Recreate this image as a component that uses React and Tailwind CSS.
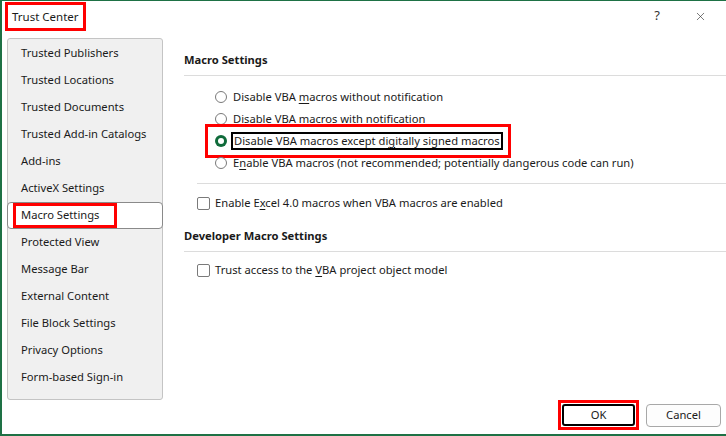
import { X } from "lucide-react";

const navItems = [
  "Trusted Publishers",
  "Trusted Locations",
  "Trusted Documents",
  "Trusted Add-in Catalogs",
  "Add-ins",
  "ActiveX Settings",
  "Macro Settings",
  "Protected View",
  "Message Bar",
  "External Content",
  "File Block Settings",
  "Privacy Options",
  "Form-based Sign-in",
];

function Radio({ checked }) {
  if (checked) {
    return (
      <span className="w-[12px] h-[12px] rounded-full bg-[#0f6b3a] flex items-center justify-center shrink-0">
        <span className="w-[6px] h-[6px] rounded-full bg-white"></span>
      </span>
    );
  }
  return <span className="w-[12px] h-[12px] rounded-full border border-[#7a7a7a] bg-white shrink-0"></span>;
}

function Checkbox() {
  return <span className="w-[13px] h-[13px] rounded-[2px] border border-[#7a7a7a] bg-white shrink-0"></span>;
}

function Ul({ children }) {
  return <u className="underline-offset-2">{children}</u>;
}

export default function App() {
  return (
    <div
      className="w-[726px] h-[436px] bg-white border-l-2 border-t border-b-2 border-[#1e7145] flex flex-col text-[11.2px] text-[#1a1a1a] overflow-hidden"
      style={{ fontFamily: '"Noto Sans", "Open Sans", sans-serif' }}
    >
      {/* title bar */}
      <div className="h-[37px] flex items-start shrink-0">
        <div className="ml-[3px] mt-[1px] h-[29px] px-[4px] border-[3px] border-[#ff0000] flex items-center">
          <span className="text-[11.5px] text-[#1a1a1a]">Trust Center</span>
        </div>
        <div className="ml-auto flex items-center h-[30px] mr-[19px] gap-[34px] text-[#333]">
          <span className="text-[13px]">?</span>
          <X className="w-[13px] h-[13px]" strokeWidth={1.2} />
        </div>
      </div>

      <div className="flex flex-1">
        {/* sidebar */}
        <div className="ml-[5px] w-[156px] h-[362px] pt-[1px] bg-[#f0f0f0] border border-[#c4c4c4] rounded-[3px] flex flex-col shrink-0">
          {navItems.map((item) =>
            item === "Macro Settings" ? (
              <div
                key={item}
                className="h-[27px] -mx-[1px] bg-white border border-[#8a8a8a] rounded-[4px] flex items-center pl-[5px]"
              >
                <div className="h-[25px] border-[3px] border-[#ff0000] flex items-center pl-[5px] pr-[15px]">
                  {item}
                </div>
              </div>
            ) : (
              <div key={item} className="h-[27px] flex items-center pl-[13px]">
                {item}
              </div>
            )
          )}
        </div>

        {/* main */}
        <div className="flex-1 pl-[21px] flex flex-col">
          <div className="mt-[12px] h-[20px] flex items-center font-bold">Macro Settings</div>
          <div className="mt-[5px] border-t border-[#dcdcdc]"></div>

          <div className="mt-[10px] pl-[31px] flex flex-col">
            <div className="h-[22px] flex items-center gap-[6px]">
              <Radio />
              <span>
                Disable VBA <Ul>m</Ul>acros without notification
              </span>
            </div>
            <div className="h-[22px] flex items-center gap-[6px]">
              <Radio />
              <span>Disable VBA macros with notification</span>
            </div>
            <div className="h-[22px] flex items-center">
              <div className="-ml-[10px] h-[34px] pl-[7px] pr-[5px] border-[3px] border-[#ff0000] flex items-center gap-[4px]">
                <Radio checked />
                <span className="border-2 border-black px-[1px] leading-[14px]">
                  Disable VBA macros except di<Ul>g</Ul>itally signed macros
                </span>
              </div>
            </div>
            <div className="h-[22px] flex items-center gap-[6px]">
              <Radio />
              <span>
                E<Ul>n</Ul>able VBA macros (not recommended; potentially dangerous code can run)
              </span>
            </div>
          </div>

          <div className="mt-[9px] ml-[13px] border-t border-[#dcdcdc]"></div>
          <div className="mt-[8px] ml-[13px] h-[22px] flex items-center gap-[5px]">
            <Checkbox />
            <span>
              Enable E<Ul>x</Ul>cel 4.0 macros when VBA macros are enabled
            </span>
          </div>

          <div className="mt-[12px] h-[20px] flex items-center font-bold">Developer Macro Settings</div>
          <div className="mt-[5px] border-t border-[#dcdcdc]"></div>
          <div className="mt-[7px] ml-[13px] h-[22px] flex items-center gap-[5px]">
            <Checkbox />
            <span>
              Trust access to the <Ul>V</Ul>BA project object model
            </span>
          </div>
        </div>
      </div>

      {/* footer */}
      <div className="h-[35px] flex items-start justify-end pr-[5px] gap-[7px] shrink-0">
        <div className="border-[3px] border-[#ff0000] p-[1px]">
          <button className="w-[73px] h-[22px] bg-white border-2 border-black rounded-[3px] flex items-center justify-center">
            OK
          </button>
        </div>
        <button className="mt-[4px] w-[75px] h-[23px] bg-[#fdfdfd] border border-[#a8a8a8] rounded-[4px] flex items-center justify-center">
          Cancel
        </button>
      </div>
    </div>
  );
}
